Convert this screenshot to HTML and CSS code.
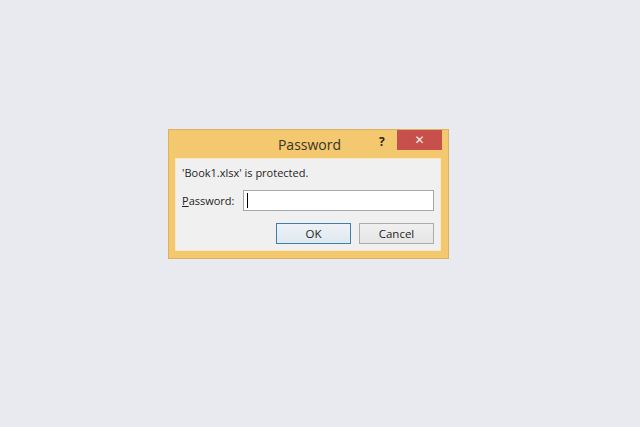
FILE: index.html
```html
<!DOCTYPE html>
<html lang="en">
<head>
    <meta charset="UTF-8">
    <meta name="viewport" content="width=device-width, initial-scale=1.0">
    <title>Password</title>
    <link rel="stylesheet" href="styles.css">
</head>
<body>
    <div class="dialog">
        <div class="title-bar">
            <span class="title">Password</span>
            <span class="help">?</span>
            <button class="close">&#x2715;</button>
        </div>

        <div class="panel">
            <p class="message">'Book1.xlsx' is protected.</p>

            <div class="field">
                <label for="pwd"><u>P</u>assword:</label>
                <div class="input"><span class="caret"></span></div>
            </div>

            <div class="buttons">
                <button class="btn btn-default">OK</button>
                <button class="btn btn-cancel">Cancel</button>
            </div>
        </div>
    </div>
</body>
</html>
```

FILE: styles.css
```css
* {
    margin: 0;
    padding: 0;
    box-sizing: border-box;
}

body {
    background: #e8eaef;
    height: 427px;
    overflow: hidden;
    padding: 129px 0 0 168px;
    font-family: "Open Sans", "Noto Sans", sans-serif;
    color: #1e1e1e;
}

.dialog {
    width: 281px;
    height: 130px;
    border: 1px solid #dcb25f;
    background: #f3c86f;
    display: flex;
    flex-direction: column;
}

.title-bar {
    height: 28px;
    position: relative;
    display: flex;
    justify-content: center;
}

.title {
    font-size: 14px;
    line-height: 30px;
    color: #3a3326;
    padding-left: 2px;
}

.help {
    position: absolute;
    left: 210px;
    top: 3px;
    font-size: 12px;
    font-weight: bold;
    color: #2a2418;
}

.close {
    position: absolute;
    right: 6px;
    top: 0;
    width: 45px;
    height: 20px;
    border: none;
    background: #c7504c;
    color: #fbeeec;
    font-size: 12px;
    font-family: "DejaVu Sans", sans-serif;
    line-height: 20px;
}

.panel {
    width: 266px;
    height: 93px;
    margin-left: 6px;
    background: #f0f0f0;
    border: 1px solid #f7e7c4;
    padding: 6px 6px 0 6px;
    font-size: 11px;
}

.message {
    line-height: 16px;
}

.field {
    display: flex;
    align-items: center;
    margin-top: 9px;
}

.field label {
    width: 61px;
}

.input {
    width: 193px;
    height: 21px;
    background: #fff;
    border: 1px solid #a6a6a6;
    padding: 2px 3px;
}

.caret {
    display: block;
    width: 1px;
    height: 15px;
    background: #000;
}

.buttons {
    display: flex;
    justify-content: flex-end;
    gap: 8px;
    margin-top: 12px;
    padding-right: 0;
}

.btn {
    width: 75px;
    height: 21px;
    font-family: inherit;
    font-size: 11.5px;
    color: #1e1e1e;
    border: 1px solid #acacac;
    background: linear-gradient(#f0f0f0, #e5e5e5);
}

.btn-default {
    border-color: #3c7fb1;
    background: linear-gradient(#ecf2f7, #e0e8f0);
}
```
